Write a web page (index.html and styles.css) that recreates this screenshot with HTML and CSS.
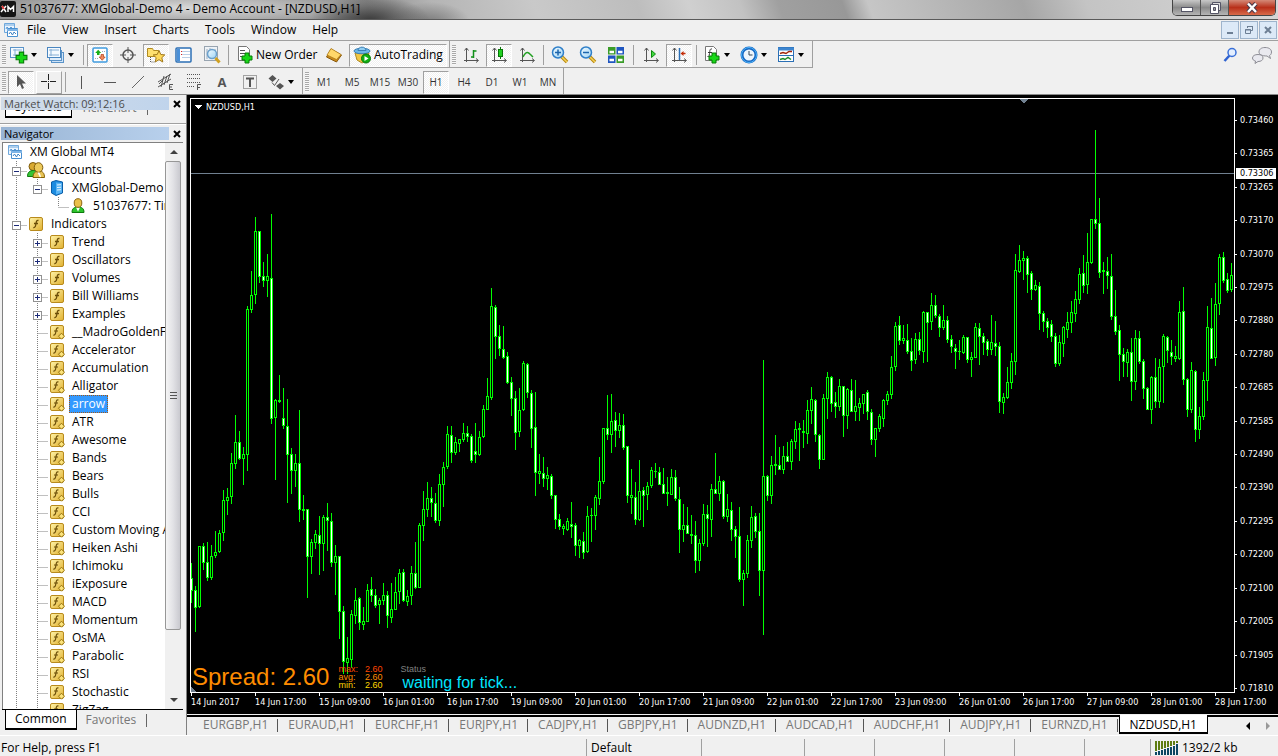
FILE: index.html
```html
<!DOCTYPE html>
<html lang="en">
<head>
<meta charset="utf-8">
<title>51037677: XMGlobal-Demo 4 - Demo Account - [NZDUSD,H1]</title>
<link rel="stylesheet" href="styles.css">
</head>
<body>
<svg class="defs" aria-hidden="true">
  <defs>
    <linearGradient id="gold" x1="0" y1="0" x2="1" y2="1"><stop offset="0" stop-color="#fff3a8"/><stop offset="1" stop-color="#e0b030"/></linearGradient>
    <linearGradient id="lens" x1="0" y1="0" x2="1" y2="1"><stop offset="0" stop-color="#f2fbff"/><stop offset="1" stop-color="#9fd4f5"/></linearGradient>
    <symbol id="plus" viewBox="0 0 12 12"><path d="M4 1h4v3h3v4H8v3H4V8H1V4h3z" fill="#18d818" stroke="#067a06"/></symbol>
    <symbol id="charts" viewBox="0 0 16 16"><path d="M1.500 1.500h10v9h-10z" fill="#eaf4fe" stroke="#6fa8dc"/><path d="M1 3h11" stroke="#6fa8dc"/><path d="M3 7l1-2 2 2 2-2 2 2" fill="none" stroke="#5b9ad5"/><path d="M4.500 6.500h10v8h-10z" fill="#fff" stroke="#4a90d0"/><path d="M4 8h11" stroke="#7db4e6" stroke-width="2"/><path d="M6 12l1.500-2 2 3 1.500-3 2 2" fill="none" stroke="#3f83c4"/></symbol>
    <symbol id="indicator" viewBox="0 0 15 15"><rect x=".5" y=".5" width="13" height="13" rx="1.500" fill="url(#gold)" stroke="#b88a1c"/><path d="M9.500 3.500C7.500 3 7.300 4.500 7 6.500S6.400 11 4.300 10.600M5 6.500h4" fill="none" stroke="#6b4e08" stroke-width="1.300"/></symbol>
    <symbol id="custom" viewBox="0 0 15 15"><rect x=".5" y=".5" width="13" height="13" rx="1.500" fill="url(#gold)" stroke="#b88a1c"/><path d="M8.500 3C6.500 2.500 6.300 4 6 6S5.400 10.500 3.300 10M4 6h4" fill="none" stroke="#6b4e08" stroke-width="1.200"/><path d="M11.500 8.200l3 3-3 3-3-3z" fill="#fbe27a" stroke="#94700f"/></symbol>
    <symbol id="server" viewBox="0 0 14 16"><path d="M1.500 2L6 .5 12.500 2v11L6 15.500 1.500 13z" fill="#1c8be0" stroke="#0b5ea8"/><path d="M6 2.500L12 3v9.500L6 14.500z" fill="#58b4f5"/><path d="M7 5l4-.3M7 7.500l4-.3M7 10l4-.3" stroke="#e8f6ff"/></symbol>
    <symbol id="person" viewBox="0 0 14 16"><path d="M1 14.500c0-4 2-5.500 6-5.500s6 1.500 6 5.500z" fill="#2cc42c" stroke="#0d7a0d"/><path d="M7 9.500l-2 0 2 4 2-4z" fill="#fff"/><ellipse cx="7" cy="5" rx="3.800" ry="4.300" fill="#e9c04a" stroke="#8c6510"/></symbol>
    <symbol id="people" viewBox="0 0 18 16"><ellipse cx="6" cy="4.500" rx="4" ry="4" fill="#d9a931" stroke="#7e5b0c"/><path d="M.5 14.500c0-4 2-6 6-6s4 2 4 6z" fill="#35c435" stroke="#0d7a0d"/><path d="M6 15.500c0-4 2-6.500 6-6.500s5.500 2.500 5.500 6.500z" fill="#e8c455" stroke="#876209"/><ellipse cx="11.500" cy="5.500" rx="4.300" ry="4.800" fill="#ecc95a" stroke="#7e5b0c"/><path d="M10.500 10.500h2l1.500 4-1 1z" fill="#fff"/></symbol>
    <symbol id="axes" viewBox="0 0 16 16"><path d="M3.500 1v14M1.500 3.500l2-2.500 2 2.500M1 13.500h14M13 11.500l2.500 2-2.500 2" fill="none" stroke="#555"/></symbol>
  </defs>
</svg>

<header class="titlebar">
  <svg class="app-logo" width="16" height="16" viewBox="0 0 16 16"><rect width="16" height="16" rx="2" fill="#151515"/><path d="M2 5l4 6M6 5l-5 6" stroke="#fff" stroke-width="1.500"/><path d="M8 11V5.500l2.500 3 3-3V11" fill="none" stroke="#fff" stroke-width="1.500"/><path d="M2 5l2 3" stroke="#e33" stroke-width="1.500"/></svg>
  <h1 class="title">51037677: XMGlobal-Demo 4 - Demo Account - [NZDUSD,H1]</h1>
  <div class="win-controls">
    <button class="win-btn" aria-label="Minimize"><svg width="14" height="12" viewBox="0 0 14 12"><rect x="1.500" y="5.500" width="11" height="4" fill="#fff" stroke="#556"/></svg></button>
    <button class="win-btn" aria-label="Restore"><svg width="14" height="12" viewBox="0 0 14 12"><path d="M4.500.5h8v8h-8z" fill="#ddd" stroke="#556"/><path d="M2.500 2.500h8v9h-8z" fill="#fff" stroke="#556"/><path d="M5.500 5.500h2v3h-2z" fill="#999" stroke="#556"/></svg></button>
    <button class="win-btn win-btn--close" aria-label="Close"><svg width="14" height="12" viewBox="0 0 14 12"><path d="M3 1.500l8 8.500M11 1.500L3 10" stroke="#4a3a4a" stroke-width="4.500"/><path d="M3 1.500l8 8.500M11 1.500L3 10" stroke="#fff" stroke-width="2.500"/></svg></button>
  </div>
</header>

<nav class="menubar">
  <svg width="16" height="16"><use href="#charts"/></svg>
  <button class="menu-item">File</button>
  <button class="menu-item">View</button>
  <button class="menu-item">Insert</button>
  <button class="menu-item">Charts</button>
  <button class="menu-item">Tools</button>
  <button class="menu-item">Window</button>
  <button class="menu-item">Help</button>
  <div class="mdi-controls">
    <button class="mdi-btn" aria-label="Minimize chart"><svg width="10" height="10"><path d="M2 8h6" stroke="#6d7f94" stroke-width="2"/></svg></button>
    <button class="mdi-btn" aria-label="Restore chart"><svg width="10" height="10" fill="none" stroke="#6d7f94"><path d="M3.500 3V1.500h5v4H7M3 1.500h6"/><path d="M1.500 4.500h5v4h-5zM1 5h6"/></svg></button>
    <button class="mdi-btn" aria-label="Close chart"><svg width="10" height="10"><path d="M2 2l6 6M8 2L2 8" stroke="#6d7f94" stroke-width="2"/></svg></button>
  </div>
</nav>

<div class="toolbar">
  <div class="band">
    <span class="grip"></span>
    <button class="tool tool--menu" aria-label="New chart"><svg width="18" height="18"><rect x=".5" y="1.500" width="13" height="10" fill="#f4faff" stroke="#5a93c8"/><path d="M3 4h9M3 9h9M5 3v7" stroke="#86aed4"/><use href="#plus" x="5" y="5" width="13" height="13"/></svg><i class="caret"></i></button>
    <button class="tool tool--menu" aria-label="Profiles"><svg width="18" height="18"><rect x="4.500" y="6.500" width="12" height="10" fill="#cfe3f7" stroke="#5a93c8"/><rect x="2.500" y="4.500" width="12" height="10" fill="#dfedfb" stroke="#5a93c8"/><rect x=".5" y="1.500" width="13" height="10" fill="#f4faff" stroke="#4a86c0"/><path d="M2 4h10M2 9h10M4 3v7" stroke="#86aed4"/></svg><i class="caret"></i></button>
    <span class="sep"></span>
    <button class="tool is-pressed" aria-label="Market Watch"><svg width="16" height="16"><rect x="1" y="1" width="14" height="14" rx="1" fill="#fff" stroke="#3f9ade" stroke-width="1.500"/><path d="M5 8V6H3.200L6.200 2.800 9.200 6H7.500V8z" fill="#18b018"/><path d="M9 7.500V10H7.200l3 3.300 3-3.300h-1.700V7.500z" fill="#f08a60" stroke="#b23d10" stroke-width=".7"/><path d="M3 11.500h3M10 4.500h3" stroke="#9ab" stroke-dasharray="1 1"/></svg></button>
    <button class="tool" aria-label="Data Window"><svg width="16" height="16" fill="none" stroke="#555"><circle cx="8" cy="8" r="5" stroke-width="1.500"/><path d="M8 0v6M8 10v6M0 8h6M10 8h6"/></svg></button>
    <button class="tool is-pressed" aria-label="Navigator"><svg width="18" height="18"><path d="M.5 2.500h5l1 2h5v6H.5z" fill="#ffe070" stroke="#b08a20"/><path d="M3.500 11v5h4" fill="none" stroke="#555" stroke-dasharray="1 1"/><path d="M12 4.500l1.800 4 4 .4-3 2.800 1 4.300-3.800-2.300L8.200 16l1-4.300-3-2.800 4-.4z" fill="#ffd95a" stroke="#a0781a"/></svg></button>
    <button class="tool" aria-label="Terminal"><svg width="18" height="16"><rect x="1" y="1" width="15" height="14" rx="1" fill="#fff" stroke="#2b6fb5" stroke-width="1.500"/><path d="M3.500 2v12" stroke="#4a90d8" stroke-width="3"/><path d="M7 4.500h8M7 7.500h8M7 10.500h8" stroke="#b9cfe6"/><path d="M6 4.500h1M6 7.500h1" stroke="#d22"/></svg></button>
    <button class="tool" aria-label="Strategy Tester"><svg width="18" height="18"><rect x="1.500" y=".5" width="13" height="14" fill="#eef2f6" stroke="#98a4b0"/><path d="M4 3v10M7 2v9M12 3v8" stroke="#9ab"/><circle cx="9" cy="8" r="4.500" fill="url(#lens)" stroke="#6ba0cc" stroke-width="1.500"/><path d="M12.500 12l4 4.500" stroke="#d0a020" stroke-width="3"/></svg></button>
    <span class="sep"></span>
    <button class="tool tool--label"><svg width="16" height="18"><path d="M1.500.5h8l3 3v11h-11z" fill="#fff" stroke="#777"/><path d="M3 4.500h5M3 7.500h7M3 10.500h4" stroke="#555"/><use href="#plus" x="4" y="6" width="12" height="12"/></svg>New Order</button>
    <button class="tool" aria-label="MetaEditor"><svg width="18" height="16"><path d="M1.500 10L6 2l10.500 6-5 7z" fill="#c98a1c" stroke="#8a5a0c"/><path d="M2 8l4-6.500L16 7.500l-4.500 5z" fill="#ffd76a" stroke="#a87414" stroke-width=".7"/></svg></button>
    <button class="tool tool--label tool--auto is-pressed"><svg width="20" height="18"><path d="M2 7h14l-2 7-5 3-5-3z" fill="#f2c744" stroke="#b08a20"/><ellipse cx="9" cy="5" rx="8" ry="2.800" fill="#6cb6e6" stroke="#3a7fb5"/><path d="M5 4.500c0-4.500 8-4.500 8 0z" fill="#8fcdf2" stroke="#3a7fb5"/><circle cx="13" cy="12.500" r="4.500" fill="#12b012" stroke="#087808"/><path d="M11.500 10l4 2.500-4 2.500z" fill="#fff"/></svg>AutoTrading</button>
  </div>
  <div class="band">
    <span class="grip"></span>
    <button class="tool" aria-label="Bar chart"><svg width="16" height="16"><use href="#axes" width="16" height="16"/><path d="M10.500 3v8M10.500 4h3M8 10h3" stroke="#12901a" stroke-width="1.500"/></svg></button>
    <button class="tool is-pressed" aria-label="Candlesticks"><svg width="16" height="16"><use href="#axes" width="16" height="16"/><path d="M9.500 0v12" stroke="#087808"/><rect x="7.500" y="2.500" width="4" height="7" fill="#20d020" stroke="#087808"/></svg></button>
    <button class="tool" aria-label="Line chart"><svg width="16" height="16"><use href="#axes" width="16" height="16"/><path d="M4 10c4-8 6-4 10 0" fill="none" stroke="#22a022" stroke-width="1.500"/></svg></button>
    <span class="sep"></span>
    <button class="tool" aria-label="Zoom in"><svg width="18" height="18"><path d="M10 10l6 6" stroke="#b8860b" stroke-width="3.500"/><path d="M10 10l6 6" stroke="#f4d258" stroke-width="1.500"/><circle cx="7" cy="6.500" r="5.500" fill="url(#lens)" stroke="#2f7fc8" stroke-width="1.500"/><path d="M4 6.500h6M7 3.500v6" stroke="#1d66ad" stroke-width="1.500"/></svg></button>
    <button class="tool" aria-label="Zoom out"><svg width="18" height="18"><path d="M10 10l6 6" stroke="#b8860b" stroke-width="3.500"/><path d="M10 10l6 6" stroke="#f4d258" stroke-width="1.500"/><circle cx="7" cy="6.500" r="5.500" fill="url(#lens)" stroke="#2f7fc8" stroke-width="1.500"/><path d="M4 6.500h6" stroke="#1d66ad" stroke-width="1.500"/></svg></button>
    <button class="tool" aria-label="Tile windows"><svg width="16" height="16"><path d="M0 0h7.500v7.500H0zM8.500 8.500H16V16H8.500z" fill="#3a9c28"/><path d="M8.500 0H16v7.500H8.500zM0 8.500h7.500V16H0z" fill="#1f55c0"/><path d="M1.500 5h4.500M10 5h4.500M1.500 13h4.500M10 13h4.500" stroke="#fff" stroke-width="2.500"/></svg></button>
    <span class="sep sep--wide"></span>
    <button class="tool" aria-label="Auto scroll"><svg width="16" height="16"><use href="#axes" width="16" height="16"/><path d="M8.500 3.500v7l4-3.500z" fill="#40d840" stroke="#0d8a0d"/></svg></button>
    <button class="tool is-pressed" aria-label="Chart shift"><svg width="16" height="16"><use href="#axes" width="16" height="16"/><path d="M8.500 1v12" stroke="#2b6fb5" stroke-width="1.500"/><path d="M14.500 6.500h-3" stroke="#c22c08" stroke-width="1.500"/><path d="M9.500 6.500l3-2.500v5z" fill="#c22c08"/></svg></button>
    <span class="sep sep--wide"></span>
    <button class="tool tool--menu" aria-label="Indicators"><svg width="18" height="18"><path d="M2.500.5h8l3 3v11h-11z" fill="#fff" stroke="#777"/><path d="M9 3C6.500 2.500 7 5 6.500 7.500S6 11 4.500 10.500M5 6.500h4" fill="none" stroke="#333"/><use href="#plus" x="5" y="6" width="12" height="12"/></svg><i class="caret"></i></button>
    <button class="tool tool--menu" aria-label="Periods"><svg width="18" height="18"><circle cx="9" cy="9" r="7" fill="#eef6fd" stroke="#1668c4" stroke-width="3"/><circle cx="9" cy="9" r="7.500" fill="none" stroke="#4fb4f8"/><path d="M9 5v4h3.500" fill="none" stroke="#345"/></svg><i class="caret"></i></button>
    <button class="tool tool--menu" aria-label="Templates"><svg width="18" height="18"><rect x="1.500" y="1.500" width="15" height="14" fill="#fff" stroke="#2b6fb5"/><path d="M1 3h16" stroke="#3d86d0" stroke-width="3"/><path d="M2 9.500h14" stroke="#2b6fb5"/><path d="M3 7.500l3-1 3 1 3-2 3 0" fill="none" stroke="#a3260c" stroke-width="1.500"/><path d="M3 13.500l3-1 2 1 3-2 3 2" fill="none" stroke="#1d8a2a" stroke-width="1.500"/></svg><i class="caret"></i></button>
  </div>
  <div class="toolbar-end">
    <button class="tool tool--bare" aria-label="Search"><svg width="16" height="16"><path d="M6.500 8.500L1.500 14" stroke="#2f62d0" stroke-width="2.500"/><circle cx="9" cy="5.500" r="4" fill="#e4efff" stroke="#3a70d8" stroke-width="1.500"/></svg></button>
    <button class="tool tool--bare" aria-label="Messages"><svg width="22" height="18" fill="#e9e9ef" stroke="#8d8d95"><path d="M14 1.500c4 0 6.500 1.800 6.500 4.500 0 2-1 3-2 3.500l1 3-3.500-2.500c-5 0-8-1.500-8-4s2-4.500 6-4.500z"/><path d="M7 8.500c3 0 5 1.200 5 3.500s-2 3.500-5 3.500l-3 2 .5-2.500C2.500 14.500 1.500 13.500 1.500 12c0-2.300 2.500-3.500 5.500-3.500z"/></svg></button>
  </div>
</div>

<div class="toolbar toolbar--second">
  <div class="band">
    <span class="grip"></span>
    <button class="tool is-pressed" aria-label="Cursor"><svg width="16" height="16"><path d="M4 1v12l3-3 2 5 2-1-2-4.500h4z" fill="#555"/></svg></button>
    <button class="tool is-framed" aria-label="Crosshair"><svg width="16" height="16" stroke="#222"><path d="M7.500 0v6M7.500 9v6M0 7.500h6M9 7.500h6M7 7.500h1"/></svg></button>
    <span class="sep"></span>
    <button class="tool" aria-label="Vertical line"><svg width="16" height="16"><path d="M7.500 2v13" stroke="#555"/></svg></button>
    <button class="tool" aria-label="Horizontal line"><svg width="16" height="16"><path d="M2 8.500h12" stroke="#555"/></svg></button>
    <button class="tool" aria-label="Trendline"><svg width="16" height="16"><path d="M2 14L14 2" stroke="#666"/></svg></button>
    <button class="tool" aria-label="Equidistant channel"><svg width="18" height="18" fill="none" stroke="#555"><path d="M1 9L14 1M1 14L14 6M4 14L7 3M7 12l3-9M10 10l3-9M2 11l4-4M16 11.500h-3.500v5H16M12 14h3"/></svg></button>
    <button class="tool" aria-label="Fibonacci retracement"><svg width="18" height="18" fill="none" stroke="#555"><path d="M2 1.500h14M2 5.500h14M2 9.500h14M2 13.500h8" stroke-dasharray="1 1"/><path d="M12.500 17v-5.500H16M12 14.500h3"/></svg></button>
    <button class="tool tool--text">A</button>
    <button class="tool" aria-label="Text label"><svg width="16" height="16" fill="none" stroke="#555"><rect x="1.500" y="1.500" width="13" height="13" stroke-dasharray="1 1"/><path d="M4 4.500h8M8 4v9" stroke-width="2"/></svg></button>
    <button class="tool tool--menu" aria-label="Arrows"><svg width="18" height="18" fill="#555"><path d="M5.500 2l4 3.500-4 3.500-4-3.500zM13 10l4 3-4 3.500-4-3.500z"/><path d="M5 9.500l2.500 3L12 6" fill="none" stroke="#555"/></svg><i class="caret"></i></button>
  </div>
  <div class="band">
    <span class="grip"></span>
    <button class="tool tool--period">M1</button>
    <button class="tool tool--period">M5</button>
    <button class="tool tool--period">M15</button>
    <button class="tool tool--period">M30</button>
    <button class="tool tool--period is-pressed">H1</button>
    <button class="tool tool--period">H4</button>
    <button class="tool tool--period">D1</button>
    <button class="tool tool--period">W1</button>
    <button class="tool tool--period">MN</button>
  </div>
</div>

<main class="workspace">
  <aside class="sidebar">
    <section class="market-watch">
      <div class="panel-title"><h2 class="caption">Market Watch: 09:12:16</h2><button class="close" aria-label="Close Market Watch"><svg width="8" height="8"><path d="M1 1l6 6M7 1L1 7" stroke="#000" stroke-width="2"/></svg></button></div>
      <div class="panel-tabs panel-tabs--cut">
        <button class="panel-tab is-active">Symbols</button>
        <button class="panel-tab">Tick Chart</button>
      </div>
    </section>
    <section class="navigator">
      <div class="panel-title"><h2 class="caption caption--active">Navigator</h2><button class="close" aria-label="Close Navigator"><svg width="8" height="8"><path d="M1 1l6 6M7 1L1 7" stroke="#000" stroke-width="2"/></svg></button></div>
      <div class="tree-box">
        <ul class="tree" id="tree"></ul>
        <div class="scrollbar">
          <button class="scroll-arrow" aria-label="Scroll up"><i class="up"></i></button>
          <div class="thumb"><i></i><i></i><i></i></div>
          <button class="scroll-arrow" aria-label="Scroll down"><i class="down"></i></button>
        </div>
      </div>
      <div class="panel-tabs">
        <button class="panel-tab is-active">Common</button>
        <button class="panel-tab">Favorites</button>
      </div>
    </section>
  </aside>

  <section class="chart-window">
    <div class="chart">
      <div class="plot">
        <svg class="candles" id="candles" aria-label="NZDUSD hourly candles"></svg>
        <p class="symbol">NZDUSD,H1</p>
        <div class="overlay">
          <p class="spread">Spread: 2.60</p>
          <dl class="spread-stats">
            <div class="max"><dt>max:</dt><dd>2.60</dd></div>
            <div class="avg"><dt>avg:</dt><dd>2.60</dd></div>
            <div class="min"><dt>min:</dt><dd>2.60</dd></div>
          </dl>
          <div class="state"><p class="state-label">Status</p><p class="state-text">waiting for tick...</p></div>
        </div>
      </div>
      <div class="price-axis">
        <ol class="prices" id="prices"></ol>
        <span class="bid">0.73306</span>
      </div>
      <ol class="times" id="times"></ol>
    </div>
    <div class="chart-tabs" id="chart-tabs"></div>
  </section>
</main>

<footer class="statusbar">
  <span class="cell cell--help">For Help, press F1</span>
  <span class="cell cell--profile">Default</span>
  <span class="cell cell--date"></span>
  <span class="cell"></span>
  <span class="cell"></span>
  <span class="cell"></span>
  <span class="cell"></span>
  <span class="cell cell--small"></span>
  <span class="cell cell--net"><svg width="24" height="14"><path d="M0 0h2v10h-2zM3 0h2v9h-2zM6 0h2v8h-2zM9 0h2v7h-2zM12 0h2v6h-2zM15 0h2v5h-2zM18 0h2v4h-2zM21 0h2v2h-2z" fill="#5f7d12"/><path d="M0 11h2v3h-2zM3 10h2v4h-2zM6 9h2v5h-2zM9 8h2v6h-2zM12 7h2v7h-2zM15 6h2v8h-2zM18 5h2v9h-2zM21 3h2v11h-2z" fill="#0d4763"/></svg>1392/2 kb</span>
</footer>
<script src="app.js"></script>
</body>
</html>
```
FILE: styles.css
```css
* { box-sizing: border-box; }
html, body { height: 100%; }
body {
  margin: 0;
  display: flex;
  flex-direction: column;
  overflow: hidden;
  background: #f0f0f0;
  color: #000;
  font: 12px/16px "Open Sans", "Noto Sans", sans-serif;
}
button {
  margin: 0;
  padding: 0;
  border: 0;
  background: none;
  color: inherit;
  font: inherit;
}
h1, h2, p, ul, ol, dl, dd { margin: 0; padding: 0; font-weight: 400; font-size: inherit; }
ul, ol { list-style: none; }
svg { display: block; flex: none; }
.defs { position: absolute; width: 0; height: 0; }

.titlebar {
  flex: none;
  display: flex;
  align-items: flex-start;
  height: 20px;
  border-bottom: 1px solid #5a5a5a;
  background:
    radial-gradient(60px 24px at 370px 20px, #3c3c3c, transparent),
    radial-gradient(40px 20px at 430px 22px, #7c7c7c, transparent),
    radial-gradient(210px 16px at 180px 8px, #d8d8d8, transparent),
    linear-gradient(70deg, #8f8f8f 0, #a2a2a2 18%, #8b8b8b 29%, #b4b4b4 34%, #c9c9c9 42%, #bdbdbd 50%, #d0d0d0 54%, #c2c2c2 58%, #a0a0a0 61%, #989898 66%, #c6c6c6 68%, #b6b6b6 74%, #a6a6a6 80%, #c4c4c4 85%, #d6d6d6 100%);
}
.app-logo { margin: 1px 4px 0 0; }
.title { flex: 1; line-height: 18px; }
.win-controls {
  display: flex;
  height: 16px;
  margin-right: 2px;
  border: 1px solid #444;
  border-top: 0;
  border-radius: 0 0 5px 5px;
  overflow: hidden;
}
.win-btn {
  display: grid;
  place-items: center;
  width: 28px;
  border-right: 1px solid #555;
  background: linear-gradient(#c8c8c8, #8a8a8a 50%, #b5b5b5);
}
.win-btn--close { width: 46px; border: 0; background: linear-gradient(#d48a78, #b8301a 50%, #d86b4a); }

.menubar {
  flex: none;
  display: flex;
  align-items: center;
  height: 21px;
  padding: 0 1px 0 3px;
  border-bottom: 1px solid #a0a0a0;
}
.menu-item { padding: 0 8px; }
.mdi-controls { display: flex; gap: 1px; margin-left: auto; }
.mdi-btn {
  display: grid;
  place-items: center;
  width: 18px;
  height: 18px;
  border: 1px solid #9eb4cc;
  background: #dce9f7;
}

.toolbar { flex: none; display: flex; height: 27px; }
.toolbar--second { height: 26px; }
.band {
  display: flex;
  align-items: center;
  gap: 2px;
  padding: 2px 2px 0;
  border: solid #a0a0a0;
  border-width: 0 1px 1px 0;
}
.toolbar--second .band { border-bottom: 0; }
.grip {
  width: 4px;
  height: 20px;
  background: repeating-linear-gradient(#a8a8a8 0 1px, #f8f8f8 1px 2px);
}
.sep { width: 1px; height: 20px; margin: 0 1px; background: #a0a0a0; }
.sep--wide { margin: 0 2px; }
.tool {
  display: grid;
  place-items: center;
  width: 26px;
  height: 23px;
  border: 1px solid transparent;
}
.tool.is-pressed {
  border-color: #a0a0a0 #fff #fff #a0a0a0;
  background: repeating-conic-gradient(#fff 0 25%, #f0f0f0 0 50%) 0 0 / 2px 2px;
}
.tool.is-framed { border-color: #fff #a0a0a0 #a0a0a0 #fff; }
.tool--menu { display: flex; align-items: center; gap: 3px; width: 35px; padding: 0 1px; }
.caret { border: solid transparent; border-width: 4px 3px 0; border-top-color: #000; }
.tool--label { display: flex; align-items: center; gap: 3px; width: 87px; padding: 0 4px; white-space: nowrap; }
.tool--auto { width: 98px; gap: 1px; padding: 0 3px; }
.tool--text { color: #555; font: 700 13px/16px "Open Sans", sans-serif; }
.tool--period { color: #333; font-size: 10px; }
.toolbar-end { display: flex; align-items: center; gap: 10px; margin-left: auto; padding: 1px 4px 0 0; }
.tool--bare { width: auto; }

.workspace { flex: 1; display: flex; min-height: 0; border-top: 1px solid #8a8a8a; }
.sidebar {
  flex: none;
  display: flex;
  flex-direction: column;
  width: 187px;
  padding-bottom: 5px;
  border-right: 1px solid #808080;
}
.market-watch { padding: 2px 3px 0 1px; border-bottom: 1px solid #a0a0a0; height: 29px; }
.navigator { flex: 1; display: flex; flex-direction: column; min-height: 0; padding: 2px 3px 0 1px; border-top: 1px solid #fff; }
.panel-title { display: flex; align-items: center; height: 13px; }
.caption {
  width: 168px;
  padding-left: 3px;
  background: linear-gradient(90deg, #d2dce8, #c0d4ec);
  color: #4c4c4c;
  line-height: 13px;
  font-size: 11px;
}
.caption--active { background: linear-gradient(90deg, #98b4d4, #b8d0ec); color: #000; }
.close { margin-left: 4px; }
.panel-tabs { flex: none; display: flex; align-items: stretch; height: 21px; margin-left: 4px; }
.panel-tab { padding: 0 9px; height: 20px; color: #777; }
.panel-tab.is-active { border: solid #000; border-width: 0 1px 2px; background: #fff; color: #000; }
.panel-tab:last-child::after { content: ""; display: inline-block; width: 1px; height: 13px; margin-left: 10px; background: #666; vertical-align: middle; }
.navigator .panel-tabs { margin-left: 1px; padding-left: 3px; border-top: 1px solid #000; }
.panel-tabs--cut { height: 8px; align-items: flex-end; overflow: hidden; }
.tree-box { flex: 1; display: flex; min-height: 0; margin: 2px 0 0 1px; border: solid #808080; border-width: 1px 0 0 1px; background: #fff; }
.tree { flex: 1; min-width: 0; overflow: hidden; padding-left: 3px; }
.node { display: flex; align-items: center; height: 18px; white-space: nowrap; }
.node-icon { flex: none; display: grid; place-items: center; width: 18px; height: 18px; margin-right: 3px; }
.node-label { padding: 0 2px; border: 1px solid transparent; line-height: 16px; }
.node-label.is-selected { background: #3399ff; border: 1px dotted #a05818; color: #fff; }
.scrollbar { flex: none; display: flex; flex-direction: column; width: 18px; background: #f0f0f0; }
.scroll-arrow { display: grid; place-items: center; height: 18px; }
.scroll-arrow .up { border: solid transparent; border-width: 0 4px 4px; border-bottom-color: #404040; }
.scroll-arrow .down { border: solid transparent; border-width: 4px 4px 0; border-top-color: #404040; }
.thumb {
  flex: 1;
  display: flex;
  flex-direction: column;
  align-items: center;
  justify-content: center;
  gap: 2px;
  margin-right: 2px;
  margin-bottom: 61px;
  border: 1px solid #979797;
  border-radius: 2px;
  background: linear-gradient(90deg, #f5f5f5, #e2e2e6 50%, #c9c9cf);
}
.thumb i { width: 7px; height: 1px; background: #555; }

.chart-window { flex: 1; display: flex; flex-direction: column; min-width: 0; }
.chart {
  flex: 1;
  display: grid;
  grid-template: minmax(0, 1fr) 21px / minmax(0, 1fr) 42px;
  min-height: 0;
  padding: 3px 1px 0 3px;
  background: #000;
  color: #fff;
  font: 9px/11px "DejaVu Sans Condensed", "Open Sans", sans-serif;
}
.plot { position: relative; border: 1px solid #fff; }
.candles { position: absolute; inset: 0; width: 100%; height: 100%; shape-rendering: crispEdges; }
.wick { fill: #00ff00; }
.body { stroke: #00ff00; stroke-width: 1px; fill: #000; }
.body--down { fill: #fff; }
.price-line, .shift-mark { fill: #708090; }
.menu-mark { fill: #fff; }
.symbol { position: absolute; left: 15px; top: 3px; }
.overlay { position: absolute; left: 1px; bottom: 0; display: flex; align-items: flex-end; font-family: "Liberation Sans", Arial, sans-serif; }
.spread { color: #ff8c00; font-size: 24px; line-height: 30px; }
.spread-stats { width: 44px; margin: 0 0 3px 9px; line-height: 8px; }
.spread-stats div { display: flex; justify-content: space-between; }
.max { color: #ff4500; }
.avg { color: #ff8c00; }
.min { color: #ffd700; }
.state { margin-left: 18px; }
.state-label { color: #808080; line-height: 10px; }
.state-text { padding-left: 2px; color: #00e5ff; font-size: 16px; line-height: 18px; }
.price-axis { position: relative; display: flex; }
.prices { flex: 1; display: flex; flex-direction: column; justify-content: space-between; height: calc(100% - 16px); margin-top: 17px; }
.prices li { display: flex; align-items: center; gap: 3px; }
.prices li::before { content: ""; width: 2px; height: 1px; background: #fff; }
.bid { position: absolute; top: 70px; left: 1px; right: 1px; padding-left: 4px; background: #fff; color: #000; }
.times { grid-column: 1 / -1; display: flex; overflow: hidden; padding-left: 1px; }
.times li { flex: none; width: 64px; white-space: nowrap; line-height: 13px; }
.times li::before { content: ""; display: block; width: 1px; height: 3px; background: #fff; }
.chart-tabs {
  flex: none;
  display: flex;
  align-items: flex-start;
  height: 20px;
  margin-top: 1px;
  border-top: 2px solid #000;
  padding-left: 6px;
}
.chart-tab { position: relative; height: 16px; padding: 0 10px; color: #777; line-height: 16px; }
.chart-tab:not(.is-active)::after { content: ""; position: absolute; right: 0; top: 2px; width: 1px; height: 13px; background: #555; }
.chart-tab.is-active { height: 19px; margin: -2px 0 0 1px; padding-top: 2px; border: solid #000; border-width: 0 1px 2px; background: #fff; color: #000; }
.tab-arrows { display: flex; align-items: center; gap: 16px; height: 17px; margin: 0 8px 0 auto; }
.tab-arrows i { border: solid transparent; border-width: 4px 4px 4px 0; border-right-color: #000; }
.tab-arrows i + i { border-width: 4px 0 4px 4px; border-left-color: #999; }

.statusbar {
  flex: none;
  display: flex;
  align-items: flex-start;
  height: 21px;
  padding-top: 3px;
  border-top: 1px solid #fff;
}
.cell { flex: none; display: flex; align-items: center; gap: 3px; width: 70px; height: 17px; padding-left: 4px; border-left: 1px solid #a0a0a0; white-space: nowrap; }
.cell--help { flex: 1; padding-left: 1px; border: 0; }
.cell--profile { width: 115px; }
.cell--date { width: 103px; }
.cell--small { width: 66px; }
.cell--net { width: 128px; }
```
FILE: app.js
```js
const SVG_NS = "http://www.w3.org/2000/svg";

/* One entry per hour: high, body top, body bottom, low (pixels on the price scale), f = falling hour. */
const CANDLES = `
563 578 591 603 f|586 590 608 632 f|546 546 607 608|543 546 563 570 f|542 562 578 581 f|545 556 578 580|531 552 556 558|530 533 552 553|490 500 533 541|488 497 501 515
453 463 497 504|415 442 464 469|431 442 459 460 f|447 454 459 485|306 309 455 471|271 295 310 313|217 231 295 304|231 231 277 283 f|262 276 281 287 f|254 276 281 297
214 278 419 424 f|399 400 418 480|375 400 402 403|388 418 426 429 f|399 426 455 503 f|448 454 471 494 f|454 463 471 487|410 463 510 522 f|495 509 511 520|509 509 557 598 f
539 542 557 574|530 534 543 549|516 535 544 575 f|515 517 544 571|503 517 521 551 f|513 521 563 567 f|545 556 563 595|556 556 612 639 f|606 611 662 674 f|637 658 663 674
610 614 660 668|588 600 616 624|597 598 623 630 f|607 621 625 630|584 590 622 622|577 589 596 602 f|589 595 606 608 f|598 600 605 624|583 595 601 605|591 595 616 628 f
583 609 618 623|577 592 610 610|569 573 592 604|569 572 601 602 f|590 596 602 606|566 573 596 605|542 573 588 589 f|523 525 588 588|491 509 526 541|482 498 510 517
487 498 503 517 f|493 503 521 523 f|474 484 521 526|462 467 485 507|426 434 467 469|426 435 453 463 f|437 442 453 455|439 439 444 452|423 433 440 442|426 433 437 442 f
434 436 461 463 f|423 451 455 463 f|431 437 455 456|405 409 437 438|378 396 410 410|288 306 398 400|305 307 337 359 f|325 336 349 356 f|326 349 358 359 f|352 356 383 384 f
377 382 399 416 f|391 398 433 450 f|388 410 432 437|361 363 410 411|363 364 393 398 f|390 393 429 448 f|392 427 473 496 f|454 471 474 484|457 473 479 487 f|467 475 479 490
474 476 496 499 f|495 495 520 529 f|514 519 527 530 f|524 526 529 535|518 521 530 531|502 524 527 538 f|523 525 546 556 f|539 540 546 558|532 541 553 559 f|506 516 552 553
508 515 516 542|495 497 516 530|457 481 499 505|428 428 482 484|395 428 435 440 f|394 421 435 453|412 420 431 447 f|413 425 431 438|414 425 448 450 f|446 446 496 503 f
469 495 498 514|482 497 520 525 f|460 491 520 521|487 490 496 527 f|482 486 495 510|467 470 486 488|463 471 472 478|467 472 485 485 f|468 484 494 494 f|477 492 494 506
469 477 495 495|470 477 499 501 f|487 499 530 553 f|504 525 530 542|507 525 534 534 f|515 534 536 544|521 535 561 573 f|539 543 561 571|504 514 544 546|505 514 519 547 f
484 489 520 537|453 489 494 494 f|476 481 494 501|480 481 517 519 f|494 509 517 522|502 510 530 541 f|526 529 537 558 f|507 536 580 582 f|570 573 580 606|535 540 574 578
506 517 541 548|513 516 532 538 f|513 531 571 596 f|360 476 571 635|475 476 496 501 f|456 465 496 504|435 464 466 475|447 465 470 470 f|446 456 470 474|442 456 462 462 f
439 441 462 470|421 429 442 449|423 428 430 461|420 431 433 448|400 410 434 444|387 399 411 424|399 400 435 442 f|434 435 460 469 f|394 398 460 460|372 377 399 419
376 377 404 412 f|392 402 407 418 f|379 386 407 411|386 386 416 437 f|388 389 416 429|379 390 412 412 f|380 406 412 421|398 403 408 421|394 394 404 414|390 392 412 420 f
409 412 440 445 f|428 428 440 457|414 416 429 432|399 400 419 427|391 394 401 405|356 367 395 399|322 326 367 371|316 325 341 345 f|325 338 341 344|324 340 352 354 f
338 351 361 371 f|333 339 360 364|332 339 351 355 f|311 312 352 363|312 312 323 362 f|293 305 322 330|295 305 316 318 f|314 316 328 337 f|305 320 328 330|316 320 340 343 f
335 339 347 353 f|344 348 352 369 f|340 351 352 360|335 337 353 354|337 337 360 363 f|352 357 360 377|323 327 358 358|323 328 337 365 f|333 336 343 355 f|339 341 350 356 f
315 342 350 355|321 343 347 356 f|342 346 402 413 f|393 397 403 414|367 382 398 399|353 361 383 389|254 270 362 375|245 260 272 273|251 258 261 280|256 258 275 293 f
271 273 290 300 f|280 285 290 291|282 286 314 330 f|311 313 322 332 f|318 321 328 338 f|320 324 337 342 f|333 336 364 367 f|335 342 364 366|326 327 344 357|312 322 330 338
301 312 323 333|291 299 314 322|268 274 300 304|255 273 286 293 f|233 262 285 294|219 219 263 264|130 219 224 229 f|198 223 273 278 f|262 270 272 294|257 271 276 289 f
254 276 317 320 f|290 316 332 335 f|325 330 355 381 f|348 354 362 377 f|349 352 363 377|338 352 382 401 f|330 338 382 390|331 338 362 364 f|359 361 389 399 f|387 388 410 410 f
376 377 410 424|358 377 402 408 f|359 367 402 408|334 336 367 403|336 337 351 363 f|340 352 357 365 f|346 356 359 362|301 312 359 360|287 311 380 385 f|378 379 410 417 f
362 370 410 413|370 371 430 442 f|407 416 430 439|372 380 417 420|306 327 381 401|298 328 359 359 f|283 304 358 366|254 257 304 315|252 257 281 283 f|273 279 291 293 f|263 275 290 292
`.trim().split(/[|\n]/);

const SCALE_TOP = 99;
const STEP = 4;

function drawChart() {
  const svg = document.getElementById("candles");
  const add = (name, className, attrs) => {
    const el = document.createElementNS(SVG_NS, name);
    el.setAttribute("class", className);
    for (const key in attrs) el.setAttribute(key, attrs[key]);
    svg.append(el);
  };
  add("rect", "price-line", { x: 0, y: 74, width: "100%", height: 1 });
  CANDLES.forEach((entry, i) => {
    const [high, top, bottom, low] = entry.split(" ").slice(0, 4).map(v => parseInt(v, 10) - SCALE_TOP);
    const x = i * STEP;
    add("rect", "wick", { x, y: high, width: 1, height: low - high });
    if (bottom - top < 3) {
      add("rect", "wick", { x: x - 1, y: top, width: 3, height: bottom - top });
    } else {
      add("rect", entry.endsWith("f") ? "body body--down" : "body", { x: x - 0.5, y: top + 0.5, width: 2, height: bottom - top - 1 });
    }
  });
  add("path", "menu-mark", { d: "M3 6h8l-4 4z" });
  add("path", "shift-mark", { d: "M828 0h9l-4 5z" });
  add("path", "shift-mark", { d: "M0 588l5 5H0z" });
}

function fillList(id, items) {
  document.getElementById(id).innerHTML = items.map(text => `<li>${text}</li>`).join("");
}

const INDICATOR_GROUPS = ["Trend", "Oscillators", "Volumes", "Bill Williams", "Examples"];
const CUSTOM_INDICATORS = ["__MadroGoldenFilter", "Accelerator", "Accumulation", "Alligator", "arrow", "ATR", "Awesome", "Bands", "Bears", "Bulls", "CCI", "Custom Moving Average", "Heiken Ashi", "Ichimoku", "iExposure", "MACD", "Momentum", "OsMA", "Parabolic", "RSI", "Stochastic", "ZigZag"];

/* Guide cells: v = line passing by, t = branch, l = last branch, + / - = branch with an expander, _ = last branch with an expander. */
const NODES = [
  ["", "charts", 16, "XM Global MT4"],
  ["-", "people", 18, "Accounts"],
  ["v_", "server", 14, "XMGlobal-Demo 4"],
  ["v l", "person", 14, "51037677: Timothy"],
  ["-", "indicator", 15, "Indicators"],
  ...INDICATOR_GROUPS.map(name => ["v+", "indicator", 15, name]),
  ...CUSTOM_INDICATORS.map(name => ["vt", "custom", 15, name]),
];

function guide(kind) {
  const line = d => `<path d="${d}" fill="none" stroke="#808080" stroke-dasharray="1 1"/>`;
  const box = sign => `<rect x="6.500" y="6.500" width="8" height="8" fill="#fff" stroke="#919191"/><path d="M8 10.500h5${sign === "+" ? "M10.500 8v5" : ""}" stroke="#1c2a78"/>`;
  let body = "";
  if ("vt+-".includes(kind)) body += line("M10.500 0V18");
  if ("l_".includes(kind)) body += line("M10.500 0V10");
  if (kind !== "v" && kind !== " ") body += line("M10.500 10.500H21");
  if (kind === "+" || kind === "-") body += box(kind);
  if (kind === "_") body += box("-");
  return `<svg width="21" height="18">${body}</svg>`;
}

function drawTree() {
  document.getElementById("tree").innerHTML = NODES.map(([guides, icon, size, label]) => {
    const selected = label === "arrow" ? " is-selected" : "";
    return `<li class="node">${[...guides].map(guide).join("")}<span class="node-icon"><svg width="${size}" height="${size === 15 ? 15 : 16}"><use href="#${icon}"/></svg></span><span class="node-label${selected}">${label}</span></li>`;
  }).join("");
}

function drawTabs() {
  const symbols = ["EURGBP", "EURAUD", "EURCHF", "EURJPY", "CADJPY", "GBPJPY", "AUDNZD", "AUDCAD", "AUDCHF", "AUDJPY", "EURNZD", "NZDUSD"];
  document.getElementById("chart-tabs").innerHTML =
    symbols.map(s => `<button class="chart-tab${s === "NZDUSD" ? " is-active" : ""}">${s},H1</button>`).join("") +
    '<span class="tab-arrows"><i></i><i></i></span>';
}

drawChart();
drawTree();
drawTabs();
fillList("prices", ["0.73460", "0.73365", "0.73265", "0.73170", "0.73070", "0.72975", "0.72880", "0.72780", "0.72685", "0.72585", "0.72490", "0.72390", "0.72295", "0.72200", "0.72100", "0.72005", "0.71905", "0.71810"]);
fillList("times", ["14 Jun 2017", "14 Jun 17:00", "15 Jun 09:00", "16 Jun 01:00", "16 Jun 17:00", "19 Jun 09:00", "20 Jun 01:00", "20 Jun 17:00", "21 Jun 09:00", "22 Jun 01:00", "22 Jun 17:00", "23 Jun 09:00", "26 Jun 01:00", "26 Jun 17:00", "27 Jun 09:00", "28 Jun 01:00", "28 Jun 17:00"]);
```
